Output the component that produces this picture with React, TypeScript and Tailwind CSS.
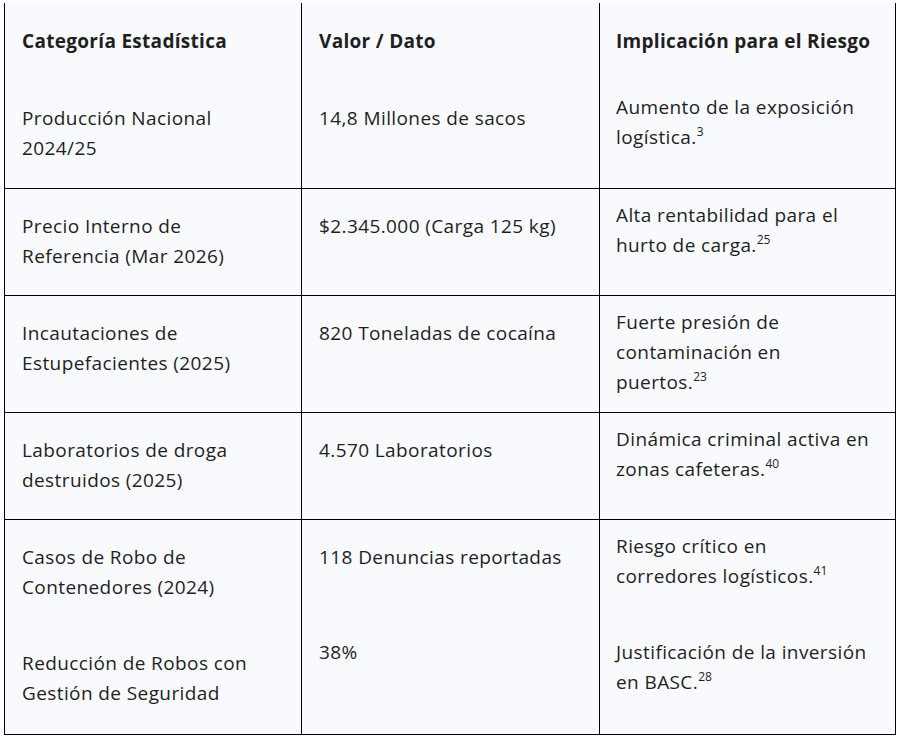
type Cell = { lines: string[]; sup?: string; tight?: boolean };
type Row = { cells: Cell[]; line: boolean; pb: string; pbTight: string };

const filas: Row[] = [
  {
    line: true,
    pb: 'pb-[25px]',
    pbTight: 'pb-[16px]',
    cells: [
      { lines: ['Producción Nacional', '2024/25'] },
      { lines: ['14,8 Millones de sacos'] },
      { lines: ['Aumento de la exposición', 'logística.'], sup: '3', tight: true },
    ],
  },
  {
    line: true,
    pb: 'pb-[24px]',
    pbTight: 'pb-[16px]',
    cells: [
      { lines: ['Precio Interno de', 'Referencia (Mar 2026)'] },
      { lines: ['$2.345.000 (Carga 125 kg)'] },
      { lines: ['Alta rentabilidad para el', 'hurto de carga.'], sup: '25', tight: true },
    ],
  },
  {
    line: true,
    pb: 'pb-[24px]',
    pbTight: 'pb-[15px]',
    cells: [
      { lines: ['Incautaciones de', 'Estupefacientes (2025)'] },
      { lines: ['820 Toneladas de cocaína'] },
      { lines: ['Fuerte presión de', 'contaminación en', 'puertos.'], sup: '23', tight: true },
    ],
  },
  {
    line: true,
    pb: 'pb-[24px]',
    pbTight: 'pb-[16px]',
    cells: [
      { lines: ['Laboratorios de droga', 'destruidos (2025)'] },
      { lines: ['4.570 Laboratorios'] },
      { lines: ['Dinámica criminal activa en', 'zonas cafeteras.'], sup: '40', tight: true },
    ],
  },
  {
    line: false,
    pb: 'pb-[24px]',
    pbTight: 'pb-[16px]',
    cells: [
      { lines: ['Casos de Robo de', 'Contenedores (2024)'] },
      { lines: ['118 Denuncias reportadas'] },
      { lines: ['Riesgo crítico en', 'corredores logísticos.'], sup: '41', tight: true },
    ],
  },
  {
    line: true,
    pb: 'pb-[26px]',
    pbTight: 'pb-[16px]',
    cells: [
      { lines: ['Reducción de Robos con', 'Gestión de Seguridad'] },
      { lines: ['38%'], tight: true },
      { lines: ['Justificación de la inversión', 'en BASC.'], sup: '28', tight: true },
    ],
  },
];

const cabecera = ['Categoría Estadística', 'Valor / Dato', 'Implicación para el Riesgo'];

const colPad = ['pl-[17px]', 'pl-[17px] border-l border-black', 'pl-4 border-l border-black'];

export default function App() {
  return (
    <div className="min-h-screen bg-white pt-[3px] pl-[4px] text-[#1f1f1f] font-['Open_Sans',sans-serif] text-[19px] leading-[30px] tracking-[0.4px]">
      <div className="w-[892px] border-x border-b border-black bg-[#f8fafd]">
        {/* Cabecera */}
        <div className="grid grid-cols-[296px_298px_1fr]">
          {cabecera.map((h, i) => (
            <div key={h} className={`pt-[23px] pb-[25px] pr-2 font-bold tracking-[0.3px] whitespace-nowrap ${colPad[i]}`}>
              {h}
            </div>
          ))}
        </div>

        {filas.map((fila, r) => (
          <div
            key={r}
            className={`grid grid-cols-[296px_298px_1fr] ${fila.line && r < filas.length - 1 ? 'border-b border-black' : ''}`}
          >
            {fila.cells.map((c, i) => (
              <div
                key={i}
                className={`pr-2 whitespace-nowrap ${c.tight ? `pt-[11px] ${fila.pbTight}` : `pt-[22px] ${fila.pb}`} ${colPad[i]}`}
              >
                {c.lines.map((l, k) => (
                  <div key={k}>
                    {l}
                    {k === c.lines.length - 1 && c.sup && (
                      <sup className="relative -top-[8px] align-baseline text-[12px] leading-none tracking-normal">
                        {c.sup}
                      </sup>
                    )}
                  </div>
                ))}
              </div>
            ))}
          </div>
        ))}
      </div>
    </div>
  );
}
